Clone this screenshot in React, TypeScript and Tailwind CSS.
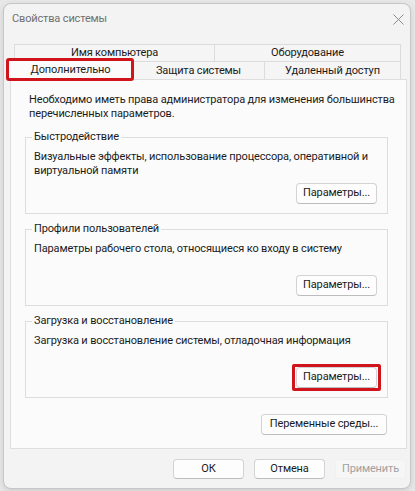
import React from "react";

function Btn({
  children,
  className = "",
  disabled = false,
}: {
  children: React.ReactNode;
  className?: string;
  disabled?: boolean;
}) {
  return (
    <div
      className={
        disabled
          ? `flex items-center justify-center whitespace-nowrap rounded-[4px] border border-[#f0f0f0] bg-[#f6f6f6] text-[#a0a0a0] ${className}`
          : `flex items-center justify-center whitespace-nowrap rounded-[4px] border border-[#d3d3d3] border-b-[#bdbdbd] bg-[#fdfdfd] text-[#1b1b1b] ${className}`
      }
    >
      {children}
    </div>
  );
}

function Group({
  title,
  lines,
  highlighted = false,
  className = "",
}: {
  title: string;
  lines: string[];
  highlighted?: boolean;
  className?: string;
}) {
  return (
    <fieldset className={`border border-[#dddddd] ${className}`}>
      <legend className="ml-[6px] whitespace-nowrap px-[2px] leading-[14px] text-[#1b1b1b]">
        {title}
      </legend>
      <div className="flex h-[69px] flex-col pl-[8px] pr-[10px] pt-[6px] pb-[9px]">
        <div className="whitespace-nowrap leading-[14px] text-[#1b1b1b]">
          {lines.map((l) => (
            <div key={l}>{l}</div>
          ))}
        </div>
        <div className="mt-auto flex justify-end">
          <div className="relative">
            <Btn className="h-[21px] w-[81px]">Параметры...</Btn>
            {highlighted && (
              <div className="pointer-events-none absolute -left-[4px] -right-[4px] -top-[3px] -bottom-[3px] rounded-[2px] border-[3px] border-[#d0141c]" />
            )}
          </div>
        </div>
      </div>
    </fieldset>
  );
}

export default function App() {
  return (
    <div className="h-[491px] w-[415px] overflow-hidden bg-[#e8e8e8] pl-[3px] pt-[3px] font-['Roboto',sans-serif] text-[11px] tracking-[-0.15px]">
      <div className="flex h-[486px] w-[408px] flex-col rounded-[8px] border border-[#c6c6c6] bg-[#f3f3f3] pl-[6px] pr-[3px] shadow-[0_2px_6px_rgba(0,0,0,0.12)]">
        {/* Title bar */}
        <div className="flex h-[40px] items-start justify-between pl-[2px] pr-[3px] pt-[8px]">
          <div className="whitespace-nowrap leading-[14px] text-[#707070]">Свойства системы</div>
          <svg width="11" height="11" viewBox="0 0 11 11" className="mt-[2px]">
            <path d="M0.5 0.5 L10.5 10.5 M10.5 0.5 L0.5 10.5" stroke="#8a8a8a" strokeWidth="1" fill="none" />
          </svg>
        </div>

        {/* Tabs row 1 */}
        <div className="ml-[4px] flex h-[17px] w-[387px]">
          <div className="flex w-[201px] items-center justify-center whitespace-nowrap border-l border-r border-t border-[#dcdcdc] bg-[#f5f5f5] leading-[14px] text-[#1b1b1b]">
            Имя компьютера
          </div>
          <div className="flex w-[186px] items-center justify-center whitespace-nowrap border-r border-t border-[#dcdcdc] bg-[#f5f5f5] leading-[14px] text-[#1b1b1b]">
            Оборудование
          </div>
        </div>

        {/* Tabs row 2 */}
        <div className="flex h-[18px] items-end">
          <div className="relative z-10 -mb-[1px] -ml-[2px] flex h-[22px] w-[125px] items-center justify-center whitespace-nowrap border-l border-r border-t border-[#dcdcdc] bg-[#fbfbfb] leading-[14px] text-[#1b1b1b]">
            Дополнительно
            <div className="pointer-events-none absolute -left-[3px] -right-[2px] -top-[1px] -bottom-[1px] rounded-[3px] border-[3px] border-[#d0141c]" />
          </div>
          <div className="flex h-[18px] w-[132px] items-center justify-center whitespace-nowrap border-t border-r border-[#dcdcdc] bg-[#f5f5f5] leading-[14px] text-[#1b1b1b]">
            Защита системы
          </div>
          <div className="flex h-[18px] w-[136px] items-center justify-center whitespace-nowrap border-t border-r border-[#dcdcdc] bg-[#f5f5f5] leading-[14px] text-[#1b1b1b]">
            Удаленный доступ
          </div>
        </div>

        {/* Panel */}
        <div className="flex h-[370px] w-[397px] flex-col border border-[#dedede] bg-[#fbfbfb] pl-[14px] pr-[18px] pt-[13px]">
          <div className="ml-[4px] whitespace-nowrap leading-[14px] text-[#1b1b1b]">
            <div>Необходимо иметь права администратора для изменения большинства</div>
            <div>перечисленных параметров.</div>
          </div>

          <Group
            className="mt-[9px]"
            title="Быстродействие"
            lines={["Визуальные эффекты, использование процессора, оперативной и", "виртуальной памяти"]}
          />
          <Group
            className="mt-[8px]"
            title="Профили пользователей"
            lines={["Параметры рабочего стола, относящиеся ко входу в систему"]}
          />
          <Group
            className="mt-[8px]"
            title="Загрузка и восстановление"
            lines={["Загрузка и восстановление системы, отладочная информация"]}
            highlighted
          />

          <div className="mt-[16px] flex justify-end pr-[1px]">
            <Btn className="h-[21px] w-[126px]">Переменные среды...</Btn>
          </div>
        </div>

        {/* Bottom buttons */}
        <div className="mt-[10px] flex justify-end gap-[10px] pr-[1px]">
          <Btn className="h-[20px] w-[71px]">ОК</Btn>
          <Btn className="h-[20px] w-[71px]">Отмена</Btn>
          <Btn className="h-[20px] w-[71px]" disabled>
            Применить
          </Btn>
        </div>
      </div>
    </div>
  );
}
